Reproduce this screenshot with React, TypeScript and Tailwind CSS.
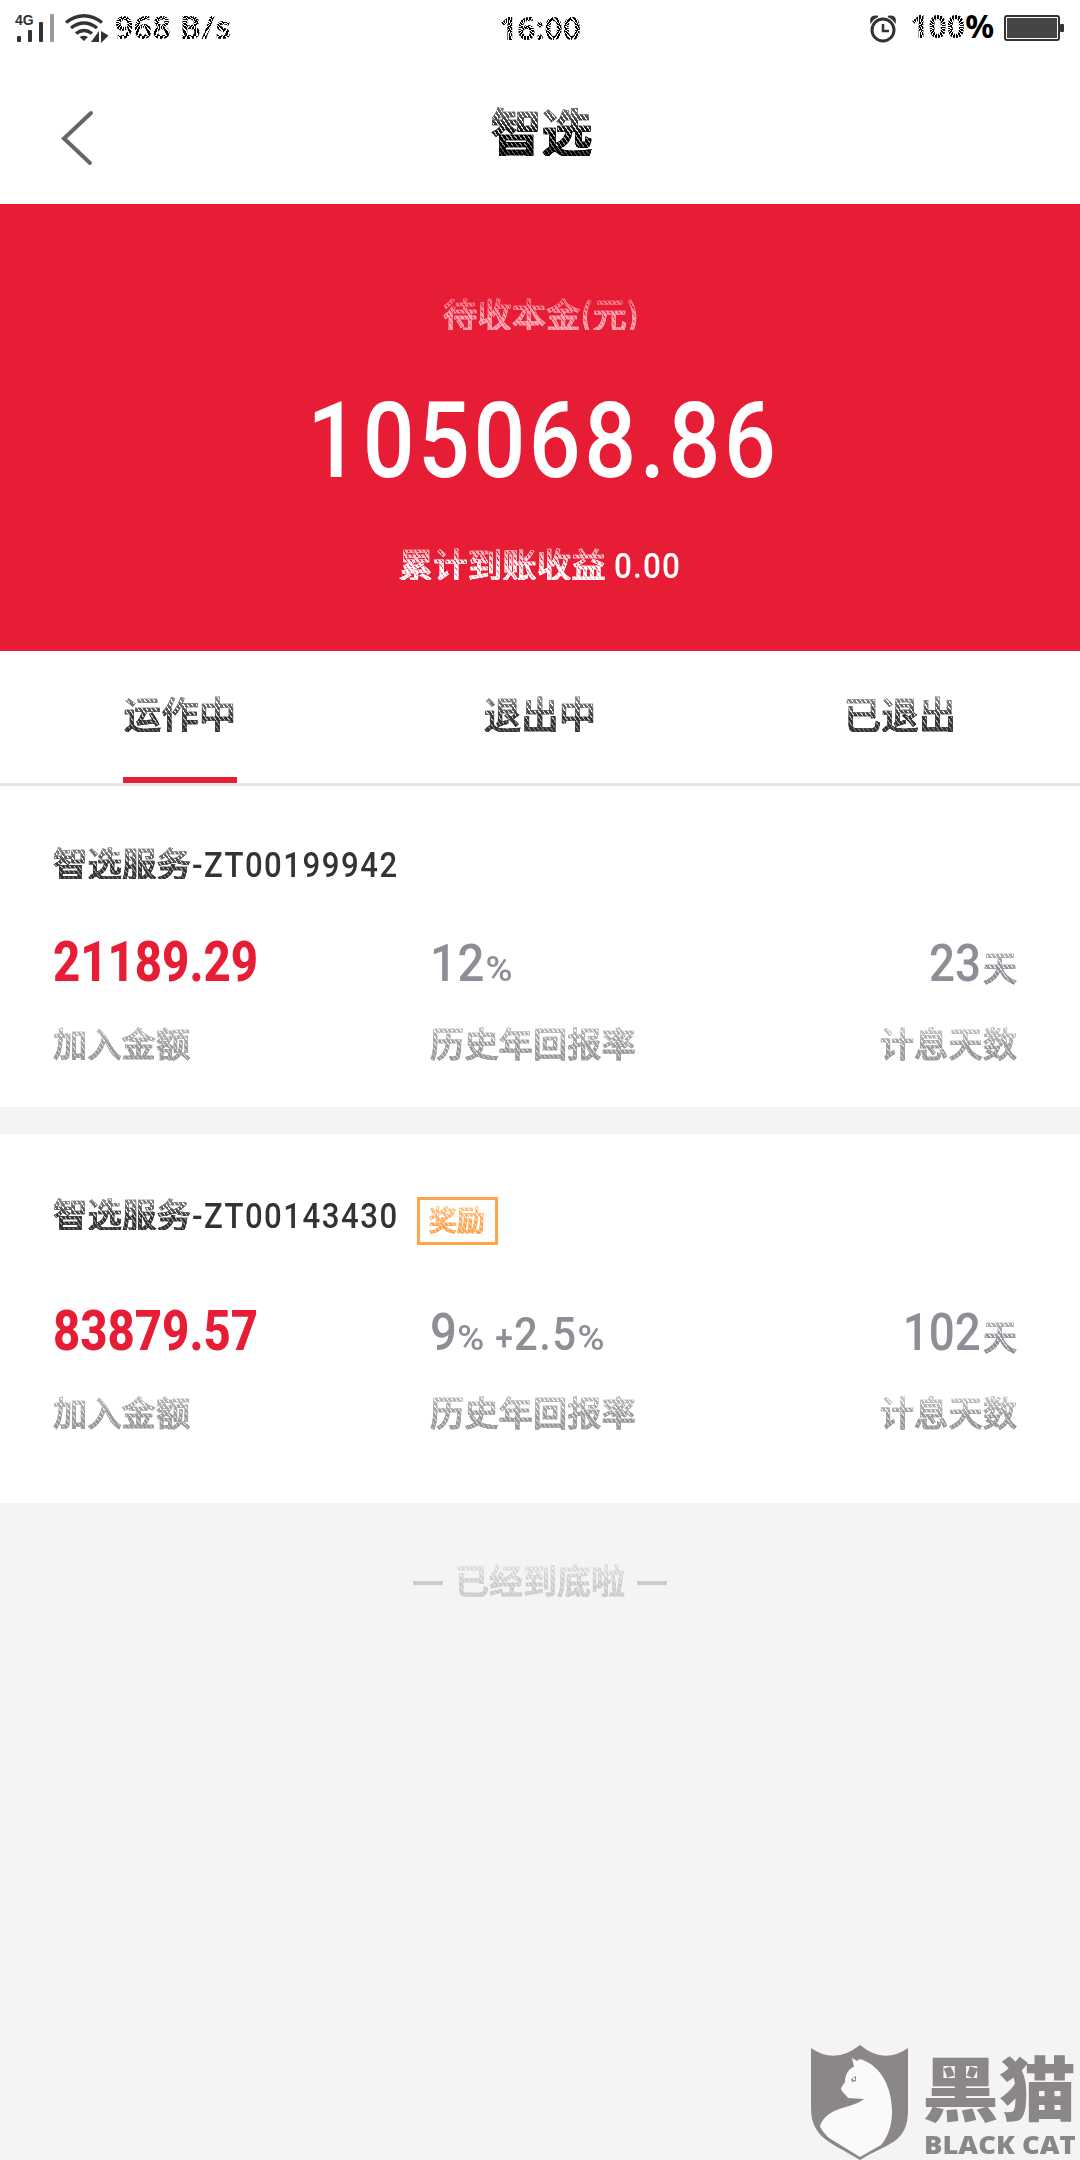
import type { ReactNode } from 'react'

const HATCH =
  "font-['Noto_Sans_CJK_SC',sans-serif] whitespace-nowrap bg-clip-text [-webkit-text-fill-color:transparent] [-webkit-text-stroke:0.7px_currentColor] bg-[repeating-linear-gradient(55deg,currentColor_0_2.4px,transparent_2.4px_3.6px),linear-gradient(to_bottom,transparent_35%,currentColor_120%)] mask-[linear-gradient(to_bottom,rgb(0_0_0/0.6)_15%,black_60%)]"

const BURST =
  "font-['Noto_Sans',sans-serif] font-bold whitespace-nowrap bg-clip-text [-webkit-text-fill-color:transparent] bg-[repeating-conic-gradient(currentColor_0_11deg,transparent_11deg_18deg)]"

type Item = {
  code: string
  badge?: string
  amount: string
  rate: ReactNode
  days: string
}

const items: Item[] = [
  {
    code: '-ZT00199942',
    amount: '21189.29',
    rate: (
      <>
        <span className="text-[52px] tracking-[0.8px]">12</span>
        <span className="inline-block origin-left scale-x-115 text-[35px]">%</span>
      </>
    ),
    days: '23',
  },
  {
    code: '-ZT00143430',
    badge: '奖励',
    amount: '83879.57',
    rate: (
      <>
        <span className="text-[52px] tracking-[0.8px]">9</span>
        <span className="mr-1.5 inline-block origin-left scale-x-115 text-[35px]">%</span>
        <span className="text-[35px] tracking-[1px]"> +</span>
        <span className="text-[46px] tracking-[1.5px]">2.5</span>
        <span className="inline-block origin-left scale-x-115 text-[35px]">%</span>
      </>
    ),
    days: '102',
  },
]

function StatusBar() {
  return (
    <div className="grid h-14 grid-cols-3 items-center">
      <div className="flex items-center pl-[15px]">
        <svg width="96" height="30" viewBox="15 12 96 30" className="shrink-0">
          <text x="15" y="24" fontSize="14" fontWeight="700" fontFamily="Liberation Sans, sans-serif" fill="#333">4G</text>
          <rect x="17" y="35" width="4" height="6" rx="1" fill="#333" />
          <rect x="28" y="29" width="4" height="12" rx="1" fill="#333" />
          <rect x="39" y="21" width="4" height="20" rx="1" fill="#333" />
          <rect x="50" y="13" width="4" height="28" rx="1" fill="#999" />
          <g fill="none" stroke="#333" strokeWidth="3.4">
            <path d="M66 21.5Q84 8 102 21.5" />
            <path d="M71 27Q84 17 97 27" />
            <path d="M76 32.5Q84 26.5 92 32.5" />
          </g>
          <path d="M79.5 36Q84 33.5 88 36L84 40ZM91 41L99 30V41ZM101 30L108.5 34.5L101 42Z" fill="#333" />
        </svg>
        <span className={`${BURST} mb-0.5 ml-1 bg-size-[18px_30px] text-[32px] leading-[42px] tracking-[0.4px] text-black`}>968 B/s</span>
      </div>
      <div className="flex justify-center">
        <span className={`${BURST} bg-size-[18px_46px] text-[32px] leading-[46px] text-black`}>16:00</span>
      </div>
      <div className="flex items-center justify-end pr-4">
        <svg width="34" height="32" viewBox="0 0 34 32" fill="none" stroke="#333">
          <circle cx="17" cy="18" r="11" strokeWidth="3" />
          <path d="M17 12V19H23" strokeWidth="2.5" />
          <path d="M5 10Q4 3 12 4.5Q8 5.5 5 10ZM29 10Q30 3 22 4.5Q26 5.5 29 10Z" fill="#333" strokeWidth="1.5" />
        </svg>
        <div className="mb-1 ml-2.5 flex text-[32px] leading-[44px] text-black">
          <span className={`${BURST} bg-size-[18px_46px]`}>100</span>
          <span className="font-['Noto_Sans',sans-serif] font-bold">%</span>
        </div>
        <svg width="60" height="26" viewBox="0 0 60 26" className="ml-2.5">
          <rect x="1" y="1" width="54" height="24" rx="2" fill="#fff" stroke="#333" strokeWidth="2" />
          <rect x="3" y="3" width="50" height="20" fill="#444" />
          <rect x="56" y="9" width="4" height="8" rx="1" fill="#333" />
        </svg>
      </div>
    </div>
  )
}

function Card({ item }: { item: Item }) {
  return (
    <div className={`bg-white pl-[53px] pr-[63px] font-['Roboto',sans-serif] ${item.badge ? 'h-[369px] pt-[62px]' : 'h-[321px] pt-[59px]'}`}>
      <div className={`flex items-start ${item.badge ? 'h-[52px]' : 'h-[34px]'}`}>
        <div className="flex items-baseline leading-[34px] text-[#333]">
          <span className={`${HATCH} text-[34.5px] font-medium`}>智选服务</span>
          <span className="-mr-[24px] ml-px inline-block origin-left scale-x-[.89] text-[35px] font-medium tracking-[1.7px]">{item.code}</span>
        </div>
        {item.badge && (
          <div className="ml-[17px] mt-px flex h-12 w-[81px] items-center justify-center border-3 border-[#ffa44d] pr-0.5 text-[28px] leading-[40px] text-[#ffa44d]">
            <span className={`${HATCH} -mt-1 font-medium`}>{item.badge}</span>
          </div>
        )}
      </div>
      <div className="mt-[57px] flex h-[52px] items-baseline leading-[52px] text-[#8e8e96]">
        <span className="w-[377px] origin-left scale-x-[.86] text-[55px] font-extrabold text-[#e71d36]">{item.amount}</span>
        <span className="flex-1 origin-left scale-x-[.91] whitespace-pre font-medium">{item.rate}</span>
        <span className="mr-0.5 origin-right scale-x-[.88] text-[52px] font-medium">{item.days}</span>
        <span className={`${HATCH} text-[34px] font-medium`}>天</span>
      </div>
      <div className="mt-[37px] flex text-[34.3px] leading-[34px] font-medium text-[#999]">
        <span className="w-[377px]"><span className={HATCH}>加入金额</span></span>
        <span className="flex-1"><span className={HATCH}>历史年回报率</span></span>
        <span className={HATCH}>计息天数</span>
      </div>
    </div>
  )
}

function Watermark() {
  return (
    <div className="mt-auto flex h-[115px] items-start pl-[811px] text-[#8b8788]">
      <svg width="98" height="116" viewBox="0 0 98 116" className="shrink-0">
        <path d="M0 3Q24 20 49 0Q73 20 97 3V65C97 99 76 98 49 115C22 98 0 94 0 63Z" fill="currentColor" />
        <path d="M41 13L46 16L49 14C72 21 81 45 81 67C81 82 76 93 70 100L49 112L18 93C12 87 10 84 9 81C16 61 41 64 53 54L37 53C34 48 30 47 30 43L34 37C34 28 39 23 43 22Z" fill="#fafafa" />
        <path d="M40 34L45 31L45 36L41 37Z" fill="currentColor" />
        <circle cx="43" cy="34" r="1.3" fill="#fafafa" />
      </svg>
      <div className="ml-[15px] flex flex-col">
        <span className="-ml-0.5 h-[86px] origin-left scale-y-[.92] whitespace-nowrap font-['Noto_Sans_CJK_SC',sans-serif] text-[77px] font-black leading-[80px]">黑猫</span>
        <span className="origin-left scale-x-[1.14] whitespace-nowrap font-['Open_Sans',sans-serif] text-[24px] font-extrabold leading-[28px]">BLACK CAT</span>
      </div>
    </div>
  )
}

export default function App() {
  return (
    <div className="flex h-[2160px] w-[1080px] flex-col overflow-hidden bg-[#f4f4f4]">
      <div className="bg-white">
        <StatusBar />
        <div className="grid h-[148px] grid-cols-3 pt-12">
          <svg width="34" height="58" viewBox="0 0 34 58" fill="none" stroke="#666" strokeWidth="4" strokeLinecap="round" className="ml-[60px] mt-[5px]">
            <path d="M31 4L4 29.5L30 54" />
          </svg>
          <div className="flex justify-center pl-[3px]">
            <span className={`${HATCH} h-[52px] text-[51px] font-bold leading-[52px] text-black`}>智选</span>
          </div>
        </div>
      </div>

      <div className="flex h-[447px] flex-col items-center bg-[#e71d36] pt-[92px] font-['Roboto',sans-serif] text-white">
        <span className={`${HATCH} ml-0.5 text-[34.3px] font-medium leading-[34px] text-[#ffa5b2]`}>待收本金(元)</span>
        <span className="ml-1.5 mt-[59px] scale-x-[.87] text-[105px] font-medium leading-[105px] tracking-[4px]">105068.86</span>
        <div className="mt-[52px] flex items-baseline gap-2 leading-[34px]">
          <span className={`${HATCH} text-[34.5px] font-medium`}>累计到账收益</span>
          <span className="-mr-[7px] origin-left scale-x-90 text-[35px] font-medium tracking-[1.3px]">0.00</span>
        </div>
      </div>

      <div className="grid h-[135px] shrink-0 grid-cols-3 border-b-3 border-[#e5e5e5] bg-white text-[37.5px] font-medium leading-[38px] text-[#333]">
        {['运作中', '退出中', '已退出'].map((tab, i) => (
          <div key={tab} className="flex flex-col items-center pt-[43px]">
            <span className={HATCH}>{tab}</span>
            {i === 0 && <div className="mt-auto h-1.5 w-[114px] bg-[#e71d36]" />}
          </div>
        ))}
      </div>

      <div className="flex flex-col gap-[27px]">
        {items.map((item) => (
          <Card key={item.code} item={item} />
        ))}
      </div>

      <div className="mt-[60px] flex items-center justify-center gap-3 text-[34px] font-medium leading-[34px] text-[#ccc]">
        <div className="mt-1.5 h-1 w-[30px] bg-[#ccc]" />
        <span className={HATCH}>已经到底啦</span>
        <div className="mt-1.5 h-1 w-[30px] bg-[#ccc]" />
      </div>

      <Watermark />
    </div>
  )
}
